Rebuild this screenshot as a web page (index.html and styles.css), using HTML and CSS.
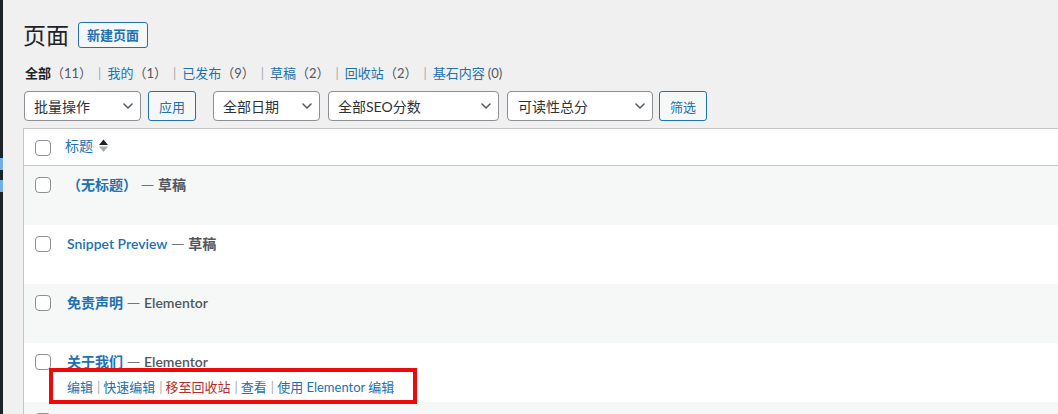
FILE: index.html
```html
<!DOCTYPE html>
<html lang="zh-CN">
<head>
<meta charset="utf-8">
<title>页面</title>
<link rel="stylesheet" href="styles.css">
</head>
<body>
<div class="page">
  <aside class="edge"><span class="mark m1"></span><span class="mark m2"></span></aside>
  <main class="wrap">
    <div class="title-row">
      <h1>页面</h1>
      <a class="btn-new">新建页面</a>
    </div>
    <div class="views">
      <a class="cur">全部<span class="count">（11）</span></a><span class="sep">|</span>
      <a>我的<span class="count">（1）</span></a><span class="sep">|</span>
      <a>已发布<span class="count">（9）</span></a><span class="sep">|</span>
      <a>草稿<span class="count">（2）</span></a><span class="sep">|</span>
      <a>回收站<span class="count">（2）</span></a><span class="sep">|</span>
      <a>基石内容<span class="count half">(0)</span></a>
    </div>
    <div class="filters">
      <div class="select s-bulk"><span>批量操作</span><svg class="chev" width="10" height="6" viewBox="0 0 10 6"><path d="M1 1 L5 5 L9 1"/></svg></div>
      <button class="btn b-apply">应用</button>
      <div class="select s-date"><span>全部日期</span><svg class="chev" width="10" height="6" viewBox="0 0 10 6"><path d="M1 1 L5 5 L9 1"/></svg></div>
      <div class="select s-seo"><span>全部SEO分数</span><svg class="chev" width="10" height="6" viewBox="0 0 10 6"><path d="M1 1 L5 5 L9 1"/></svg></div>
      <div class="select s-read"><span>可读性总分</span><svg class="chev" width="10" height="6" viewBox="0 0 10 6"><path d="M1 1 L5 5 L9 1"/></svg></div>
      <button class="btn b-filter">筛选</button>
    </div>
    <div class="table">
      <div class="thead">
        <div class="cb"><span class="box"></span></div>
        <div class="th-title"><a>标题</a><svg class="sort" width="9" height="14" viewBox="0 0 9 14"><path class="up" d="M0 6 L4.5 0.5 L9 6 Z"/><path class="down" d="M0 7.5 L9 7.5 L4.5 13 Z"/></svg></div>
      </div>
      <div class="row alt">
        <div class="cb"><span class="box"></span></div>
        <div class="cell"><div class="title"><a>（无标题）</a> <span class="state"><span class="dash">—</span> 草稿</span></div></div>
      </div>
      <div class="row">
        <div class="cb"><span class="box"></span></div>
        <div class="cell"><div class="title"><a>Snippet Preview</a> <span class="state"><span class="dash">—</span> 草稿</span></div></div>
      </div>
      <div class="row alt">
        <div class="cb"><span class="box"></span></div>
        <div class="cell"><div class="title"><a>免责声明</a> <span class="state"><span class="dash">—</span> Elementor</span></div></div>
      </div>
      <div class="row">
        <div class="cb"><span class="box"></span></div>
        <div class="cell">
          <div class="title"><a>关于我们</a> <span class="state"><span class="dash">—</span> Elementor</span></div>
          <div class="actions"><span class="act-wrap"><a>编辑</a><span class="bar">|</span><a>快速编辑</a><span class="bar">|</span><a class="trash">移至回收站</a><span class="bar">|</span><a>查看</a><span class="bar">|</span><a>使用 Elementor 编辑</a></span></div>
        </div>
      </div>
      <div class="row alt">
        <div class="cb"><span class="box"></span></div>
        <div class="cell"></div>
      </div>
    </div>
  </main>
</div>
</body>
</html>
```
FILE: styles.css
```css
*, *::before, *::after { box-sizing: border-box; margin: 0; padding: 0; }
html, body { height: 100%; }
body {
  background: #f0f0f1;
  font-family: "Lato", "Noto Sans CJK SC", sans-serif;
  font-size: 13px;
  color: #3c434a;
  overflow: hidden;
}
a { text-decoration: none; color: #2271b1; }

.page { display: flex; height: 414px; }

.edge {
  width: 3px;
  flex: none;
  background: #1d2327;
  display: flex;
  flex-direction: column;
}
.mark { display: block; width: 3px; height: 12px; background: #72aee6; }
.m1 { margin-top: 158px; }
.m2 { margin-top: 10px; }

.wrap { flex: 1; min-width: 0; padding-left: 20px; }

.title-row { display: flex; align-items: center; height: 26px; margin-top: 22px; }
h1 { font-size: 23px; font-weight: 400; line-height: 26px; color: #1d2327; }
.btn-new {
  margin-left: 9px;
  height: 26px;
  padding: 0 8px;
  border: 1px solid #2271b1;
  border-radius: 3px;
  background: #f6f7f7;
  color: #2271b1;
  font-size: 13px;
  font-weight: 600;
  line-height: 24px;
}

.views {
  display: flex;
  align-items: center;
  margin-top: 14px;
  height: 22px;
  line-height: 22px;
  padding-left: 2px;
  font-size: 13px;
}
.views a { color: #2271b1; white-space: nowrap; }
.views a.cur { color: #1d2327; font-weight: 600; }
.count { color: #50575e; font-weight: 400; }
.count.half { margin-left: 3px; }
.sep { color: #a7aaad; padding: 0 6px; }

.filters { display: flex; margin-top: 7px; height: 30px; padding-left: 1px; }
.select {
  height: 30px;
  border: 1px solid #8c8f94;
  border-radius: 4px;
  background: #fff;
  display: flex;
  align-items: center;
  justify-content: space-between;
  padding: 0 7px 0 9px;
  font-size: 14px;
  color: #2c3338;
}
.chev path { fill: none; stroke: #50575e; stroke-width: 1.5; stroke-linecap: round; stroke-linejoin: round; }
.s-bulk { width: 117px; }
.s-date { width: 107px; margin-left: 17px; }
.s-seo { width: 171px; margin-left: 8px; }
.s-read { width: 146px; margin-left: 8px; padding-left: 10px; }
.btn {
  height: 30px;
  border: 1px solid #2271b1;
  border-radius: 3px;
  background: #f6f7f7;
  color: #2271b1;
  font-family: inherit;
  font-size: 13px;
  display: flex;
  align-items: center;
  justify-content: center;
}
.b-apply { width: 48px; margin-left: 7px; }
.b-filter { width: 48px; margin-left: 6px; }

.table {
  margin-top: 7px;
  background: #fff;
  border: 1px solid #c3c4c7;
  border-right: none;
  border-bottom: none;
}
.thead { display: flex; height: 37px; border-bottom: 1px solid #c3c4c7; }
.cb { width: 41px; flex: none; padding: 11px 0 0 11px; }
.box {
  display: block;
  width: 16px;
  height: 16px;
  border: 1px solid #8c8f94;
  border-radius: 4px;
  background: #fff;
}
.th-title { display: flex; align-items: center; gap: 6px; height: 20px; margin-top: 7px; font-size: 14px; line-height: 20px; }
.sort .up { fill: #1d2327; }
.sort .down { fill: #a7aaad; }

.row { display: flex; height: 59px; background: #fff; }
.row.alt { background: #f6f7f7; }
.cell { padding: 8px 0 0 2px; }
.title { font-size: 14px; font-weight: 600; line-height: 20px; white-space: nowrap; }
.title a { color: #2271b1; }
.state { color: #50575e; }
.dash { font-family: "Noto Sans CJK SC", sans-serif; font-weight: 700; }
.actions { margin-top: 5px; line-height: 20px; font-size: 13px; white-space: nowrap; }
.act-wrap { position: relative; display: inline-block; }
.act-wrap::after {
  content: "";
  position: absolute;
  left: -18px;
  top: -9px;
  width: 368px;
  height: 36px;
  border: 4px solid #ee0a0a;
}
.bar { color: #a7aaad; padding: 0 3px 0 4px; }
.trash { color: #b32d2e !important; }
```
